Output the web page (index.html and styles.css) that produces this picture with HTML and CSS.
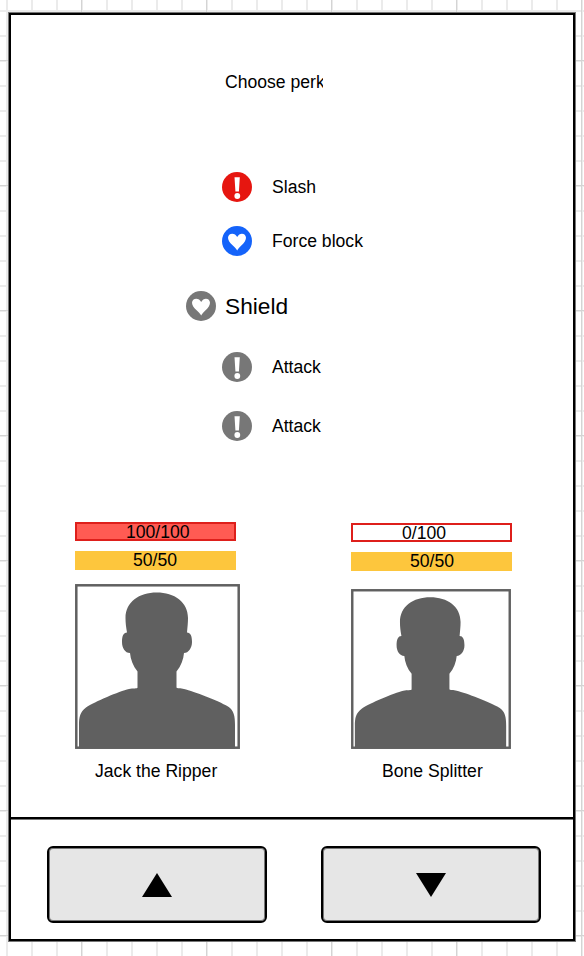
FILE: index.html
```html
<!DOCTYPE html>
<html lang="en">
<head>
<meta charset="utf-8">
<title>Choose perk</title>
<link rel="stylesheet" href="styles.css">
</head>
<body>
<svg class="defs" width="0" height="0" aria-hidden="true">
  <symbol id="alert" viewBox="0 0 30 30">
    <circle cx="15" cy="15" r="15" fill="currentColor"/>
    <path d="M12.5 5.3h5.3l-.9 14.2h-3.5z" fill="#fff"/>
    <circle cx="15.3" cy="24" r="2.9" fill="#fff"/>
  </symbol>
  <symbol id="heart" viewBox="0 0 30 30">
    <circle cx="15" cy="15" r="15" fill="currentColor"/>
    <path d="M15.2 24.4C13.8 21.4 6 16.8 6 11.8C6 6.8 13 6 15.2 11C17.4 6 24 6.800 24 11.800C24 16.800 16.600 21.400 15.200 24.400Z" fill="#fff"/>
  </symbol>
  <symbol id="portrait" viewBox="0 0 165 165">
    <rect x="1.300" y="1.300" width="162.400" height="162.400" fill="#fff" stroke="#606060" stroke-width="2.500"/>
    <path d="M4 164.500V141C4 133 5 128 11 123.500C20 117.500 44 107.500 54 105C58 104 62.500 105 62.500 103.500V87.500C58 82 55.500 75 55 69C50 69 47 64 47 58C47 52 48.500 48.500 52 48.500C51 43 50.500 39 50.500 34C50.500 18 64 8.500 81.700 8.500C99.500 8.500 113 18 113 34C113 39 112.500 43 112 48.500C115.500 48.500 117 52 117 58C117 64 113.500 69 109 69C108.500 75 106 82 101.500 87.500V103.500C101.500 104.500 106 104 109 105C119 107.500 143 116.500 153 122.500C159 126.500 160 132 160 141V164.500Z" fill="#606060"/>
  </symbol>
</svg>
<main class="frame">
  <section class="screen">
    <h1 class="title">Choose perk</h1>
    <ul class="perks">
      <li class="perk red"><svg class="icon"><use href="#alert"/></svg><span>Slash</span></li>
      <li class="perk blue"><svg class="icon"><use href="#heart"/></svg><span>Force block</span></li>
      <li class="perk selected"><svg class="icon"><use href="#heart"/></svg><span>Shield</span></li>
      <li class="perk"><svg class="icon"><use href="#alert"/></svg><span>Attack</span></li>
      <li class="perk last"><svg class="icon"><use href="#alert"/></svg><span>Attack</span></li>
    </ul>
    <div class="fighters">
      <article class="fighter player">
        <div class="bar health full">100/100</div>
        <div class="bar stamina">50/50</div>
        <svg class="portrait"><use href="#portrait"/></svg>
        <div class="name">Jack the Ripper</div>
      </article>
      <article class="fighter enemy">
        <div class="bar health">0/100</div>
        <div class="bar stamina">50/50</div>
        <svg class="portrait"><use href="#portrait"/></svg>
        <div class="name">Bone Splitter</div>
      </article>
    </div>
  </section>
  <nav class="controls">
    <button class="button" aria-label="Up"><svg class="arrow" viewBox="0 0 30 24"><path d="M15 0L30 24H0Z"/></svg></button>
    <button class="button" aria-label="Down"><svg class="arrow" viewBox="0 0 30 24"><path d="M0 0H30L15 24Z"/></svg></button>
  </nav>
</main>
</body>
</html>
```
FILE: styles.css
```css
* { box-sizing: border-box; }

body {
  margin: 0;
  height: 956px;
  overflow: hidden;
  padding: 13px 9px 15px;
  font: 17.6px/20px "Liberation Sans", Arial, sans-serif;
  color: #000;
  background-color: #fff;
  background-image:
    linear-gradient(90deg, #d4d4d4 1px, transparent 1px),
    linear-gradient(#d4d4d4 1px, transparent 1px),
    linear-gradient(90deg, #ebebeb 2px, transparent 2px),
    linear-gradient(#ebebeb 2px, transparent 2px);
  background-size: 125px 125px, 125px 125px, 25px 25px, 25px 25px;
  background-position: 81px 0, 0 60px, 6px 0, 0 10px;
}

.defs { position: absolute; }

.frame {
  width: 566px;
  height: 928px;
  border: 2px solid #000;
  box-shadow: 0 0 0 1px #777;
  background: #fff;
}

.screen {
  height: 804px;
  padding-top: 57px;
  border-bottom: 2px solid #000;
  box-shadow: 0 1px 0 #777;
}

.title {
  margin: 0 0 0 214px;
  width: 98px;
  overflow: hidden;
  font-size: inherit;
  font-weight: normal;
  white-space: nowrap;
}

.perks {
  list-style: none;
  margin: 80px 0 0 211px;
  padding: 0;
}

.perk {
  display: flex;
  align-items: center;
  gap: 20px;
  height: 30px;
  margin-bottom: 24px;
  color: #777;
}

.perk span { color: #000; }
.red { color: #e61610; }
.blue { color: #1463fa; margin-bottom: 35px; }

.selected {
  gap: 9px;
  margin-left: -36px;
  margin-bottom: 31px;
  font-size: 22.7px;
}

.perk:nth-child(4) { margin-bottom: 29px; }
.perk.last { margin-bottom: 0; }

.icon { width: 30px; height: 30px; flex: none; }

.fighters {
  display: flex;
  gap: 111px;
  margin: 81px 0 0 64px;
}

.fighter {
  display: flex;
  flex-direction: column;
  width: 165px;
}

.bar {
  width: 161px;
  height: 19px;
  line-height: 19px;
  background: #fdc63d;
  white-space: nowrap;
}

.health {
  margin-bottom: 10px;
  border: 2px solid #de1f1b;
  line-height: 16px;
  background: #fff;
}

.full { background: #ff5b53; }
.portrait { display: block; width: 165px; height: 165px; margin-top: 14px; }
.name { margin: 12px 0 0 20px; }

.player .health { padding-left: 49px; }
.player .stamina { padding-left: 58px; }

.enemy { margin-top: 1px; }
.enemy .health { padding-left: 49px; }
.enemy .stamina { padding-left: 59px; }
.enemy .portrait { width: 160px; height: 160px; margin-top: 18px; }
.enemy .name { margin-left: 31px; }

.controls {
  display: flex;
  gap: 54px;
  padding: 27px 0 0 36px;
}

.button {
  display: flex;
  justify-content: center;
  align-items: center;
  width: 220px;
  height: 77px;
  padding: 0;
  border: 2px solid #000;
  border-radius: 6px;
  background: #e6e6e6;
  box-shadow: inset 0 0 0 1px #777;
}

.arrow { width: 30px; height: 24px; }
```
